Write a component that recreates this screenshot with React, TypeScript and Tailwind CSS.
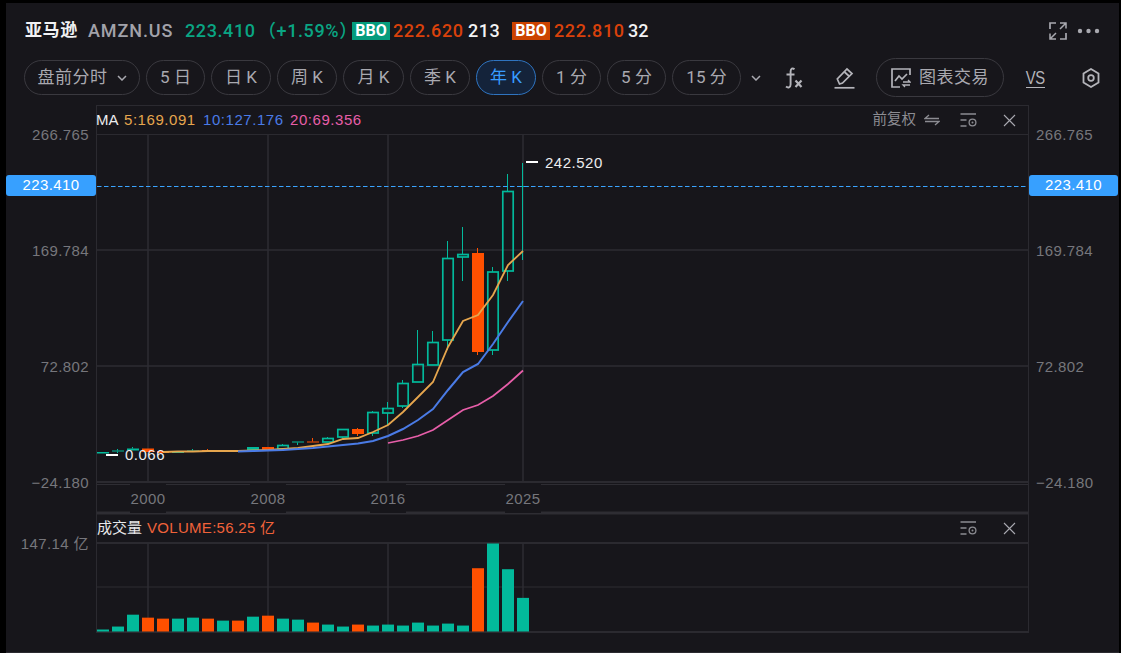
import React from "react";

const TEAL = "#02b99b";
const ORANGE = "#ff5000";
const BG = "#17161b";
const GRID = "#2e2d33";

type C = { i: number; t: number; b: number; hi?: number; lo?: number; o?: boolean; solid?: boolean };
const candles: C[] = [
  { i: 0, t: 452, b: 453.5, solid: true },
  { i: 1, t: 450.5, b: 451.5, hi: 449, lo: 453, solid: true },
  { i: 2, t: 448.5, b: 450.5, hi: 447, solid: true },
  { i: 3, t: 448.5, b: 452, o: true, solid: true },
  { i: 4, t: 451, b: 453, o: true, solid: true },
  { i: 5, t: 451.5, b: 453, solid: true },
  { i: 6, t: 450.5, b: 452, hi: 449, solid: true },
  { i: 7, t: 450, b: 451.5, hi: 449, o: true, solid: true },
  { i: 8, t: 450, b: 452, solid: true },
  { i: 9, t: 450, b: 452, o: true, solid: true },
  { i: 10, t: 447, b: 451, solid: true },
  { i: 11, t: 447, b: 450.5, o: true, solid: true },
  { i: 12, t: 445.5, b: 449, hi: 444 },
  { i: 13, t: 441.5, b: 442.5, lo: 445, solid: true },
  { i: 14, t: 441.5, b: 442.5, hi: 438, o: true, solid: true },
  { i: 15, t: 438.5, b: 442, hi: 437 },
  { i: 16, t: 429.5, b: 437, lo: 438.5 },
  { i: 17, t: 429, b: 434, hi: 428, lo: 436, o: true, solid: true },
  { i: 18, t: 412.5, b: 433, hi: 411, lo: 436 },
  { i: 19, t: 408.5, b: 413, hi: 402, lo: 425 },
  { i: 20, t: 383.5, b: 406, hi: 380, lo: 408 },
  { i: 21, t: 364.5, b: 382, hi: 330 },
  { i: 22, t: 342.5, b: 365, hi: 331 },
  { i: 23, t: 258.5, b: 340, hi: 241, lo: 350 },
  { i: 24, t: 254.5, b: 257, hi: 227, lo: 281 },
  { i: 25, t: 253, b: 352, hi: 248, lo: 355, o: true, solid: true },
  { i: 26, t: 272, b: 350, hi: 267, lo: 355 },
  { i: 27, t: 191.5, b: 271, hi: 174, lo: 281 },
];

const ma5 = "163,452 178,451.5 193,451.5 208,451 223,451 238,451 253,450.5 268,450 283,449 298,448 313,446 328,444 343,439 358,438 373,432 388,425 403,412 418,397 433,382 448,347 463,321 478,315 493,295 508,265 523,251";
const ma10 = "238,451.5 253,451 268,450.5 283,450 298,449 313,448 328,446.5 343,445 358,443.5 373,441 388,436 403,429 418,420 433,409 448,390 463,372 478,364 493,344 508,322 523,301";
const ma20 = "388,443 403,440 418,436 433,430 448,420 463,410 478,405 493,396 508,384 523,370.5";

const vols: [number, boolean][] = [
  [2, false], [5, false], [17, false], [14, true], [13, true], [13, false], [14, false], [13, true], [11, false], [11, true],
  [15, false], [16, true], [13, false], [12, false], [9, true], [7, false], [5, false], [7, true], [6, false], [7, false],
  [6, false], [9, false], [6, false], [8, false], [6, false], [64, true], [89, false], [63, false], [34, false],
];

const pills = [
  { w: "w-[59px]", t: "5 日" },
  { w: "w-[60px]", t: "日 K" },
  { w: "w-[60px]", t: "周 K" },
  { w: "w-[61px]", t: "月 K" },
  { w: "w-[60px]", t: "季 K" },
  { w: "w-[60px]", t: "年 K", active: true },
  { w: "w-[59px]", t: "1 分" },
  { w: "w-[59px]", t: "5 分" },
  { w: "w-[69px]", t: "15 分" },
];

const Chevron = () => (
  <svg width="10" height="6" viewBox="0 0 10 6" fill="none" stroke="#a9a9b0" strokeWidth="1.5">
    <path d="M1 1l4 4 4-4" />
  </svg>
);

const SettingsIcon = () => (
  <svg width="17" height="15" viewBox="0 0 17 15" fill="none" stroke="#8c8c92" strokeWidth="1.3">
    <path d="M0.5 1h15.5M0.5 7h6M0.5 13h6" />
    <circle cx="12.5" cy="9.5" r="3.4" />
    <circle cx="12.5" cy="9.5" r="1" fill="#8c8c92" stroke="none" />
  </svg>
);

const CloseIcon = () => (
  <svg width="13" height="13" viewBox="0 0 13 13" fill="none" stroke="#a9a9b0" strokeWidth="1.1">
    <path d="M1 1l11 11M12 1L1 12" />
  </svg>
);

const grid = [148, 268, 388, 523];

export default function App() {
  return (
    <div className="w-[1121px] h-[653px] bg-black pt-[3px] pl-[6px] pr-[2px] overflow-hidden font-['Liberation_Sans','Noto_Sans_CJK_SC',sans-serif]">
      <div className="h-[650px] bg-[#17161b] flex flex-col border-b border-[#2b2a30]">
        {/* header */}
        <div className="h-[55px] shrink-0 flex items-center pl-[19px] font-['Roboto','Noto_Sans_CJK_SC',sans-serif]">
          <span className="text-[17px] font-bold text-[#f2f2f4] tracking-[0.6px] w-[63px]">亚马逊</span>
          <span className="text-[18px] font-medium text-[#a2a2aa] w-[97px] tracking-[0.9px]">AMZN.US</span>
          <span className="text-[18px] font-medium text-[#0aa583] tracking-[0.6px] w-[73px]">223.410</span>
          <span className="text-[18px] font-medium text-[#0aa583] tracking-[0.6px] w-[94px] whitespace-nowrap">（+1.59%）</span>
          <span className="w-[38px] h-[18px] bg-[#059c7d] text-white text-[16px] font-bold flex items-center justify-center">BBO</span>
          <span className="ml-[3px] text-[18px] font-medium text-[#d9410b] tracking-[0.6px] w-[75px]">222.620</span>
          <span className="text-[18px] font-medium text-[#f2f2f4] tracking-[0.5px] w-[44px]">213</span>
          <span className="w-[38px] h-[18px] bg-[#cc4300] text-white text-[16px] font-bold flex items-center justify-center">BBO</span>
          <span className="ml-[4px] text-[18px] font-medium text-[#d9410b] tracking-[0.6px] w-[74px]">222.810</span>
          <span className="text-[18px] font-medium text-[#f2f2f4]">32</span>
          <div className="ml-auto flex items-center pr-[19px] gap-[10px]">
            <svg width="18" height="18" viewBox="0 0 18 18" fill="none" stroke="#a9a9b0" strokeWidth="1.7">
              <path d="M1 7V1h6M17 11v6h-6" />
              <path d="M11 1h6v5.5M16.5 1.5L11 7M7 17H1v-5.5M1.5 16.500L7 11" strokeWidth="1.5" />
            </svg>
            <svg width="23" height="6" viewBox="0 0 23 6" fill="#a9a9b0">
              <circle cx="3" cy="3" r="2.2" />
              <circle cx="11.500" cy="3" r="2.2" />
              <circle cx="20" cy="3" r="2.2" />
            </svg>
          </div>
        </div>

        {/* toolbar */}
        <div className="h-[39px] shrink-0 flex items-center pl-[18px] text-[#a9a9b0] font-['Roboto','Noto_Sans_CJK_SC',sans-serif]">
          <div className="w-[116px] h-[35px] rounded-full border border-[#3a393f] flex items-center justify-center gap-[9px] text-[17px] tracking-[0.5px]">
            <span>盘前分时</span>
            <Chevron />
          </div>
          <div className="ml-[6px] flex gap-[6px]">
            {pills.map((p) => (
              <div
                key={p.t}
                className={`${p.w} h-[35px] rounded-full border flex items-center justify-center text-[17px] whitespace-pre ${
                  p.active ? "border-[#2f74c0] bg-[#14233a] text-[#389cff]" : "border-[#3a393f]"
                }`}
              >
                {p.t}
              </div>
            ))}
          </div>
          <div className="ml-[10px]">
            <Chevron />
          </div>
          <svg className="ml-[22px]" width="20" height="22" viewBox="0 0 20 22" fill="none" stroke="#b4b4ba" strokeWidth="1.9">
            <path d="M11.5 2.2C9.5 0.6 7.6 1.6 7.600 4.500V17.500C7.600 20.600 5 21.200 3 19.600M3.500 7.500H11.500" />
            <path d="M12.500 13.500l6 6.500M18.500 13.500l-6 6.500" strokeWidth="2.2" />
          </svg>
          <svg className="ml-[31px]" width="21" height="22" viewBox="0 0 21 22" fill="none" stroke="#b4b4ba" strokeWidth="1.7">
            <path d="M4 17.500L1.800 12.500L11.500 2.500L16.500 7L7 16.500L4 17.500Z" transform="translate(1.500 -0.500)" />
            <path d="M10.500 5L15.500 9.500" />
            <path d="M0.500 20.800H20.500" />
          </svg>
          <div className="ml-[21px] w-[128px] h-[39px] rounded-full border border-[#3a393f] flex items-center pl-[14px] gap-[8px]">
            <svg width="20" height="20" viewBox="0 0 20 20" fill="none" stroke="#b4b4ba" strokeWidth="1.7">
              <path d="M19 7V1H1v18h8" />
              <path d="M4 13l4-5 3 3 5-5" />
              <path d="M12 14h7l-2-2M19 17h-7l2 2" strokeWidth="1.3" />
            </svg>
            <span className="text-[17px] tracking-[0.5px] whitespace-nowrap">图表交易</span>
          </div>
          <div className="ml-[22px] w-[19px] h-[20px] border-b-[1.5px] border-[#b4b4ba] flex items-center justify-center text-[#b4b4ba]">
            <span className="text-[19px] leading-none scale-x-[0.78] tracking-[-0.5px] font-['Liberation_Sans',sans-serif]">VS</span>
          </div>
          <svg className="ml-[37px]" width="18" height="20" viewBox="0 0 18 20" fill="none" stroke="#b4b4ba" strokeWidth="1.8">
            <path d="M9 1l7.500 4.400v9.200L9 19l-7.500-4.400V5.400Z" />
            <circle cx="9" cy="10" r="2.800" />
          </svg>
        </div>

        {/* chart */}
        <div className="mt-[8px] flex flex-1 min-h-0">
          {/* left axis */}
          <div className="w-[90px] shrink-0 relative flex flex-col items-end pr-[7px] text-[#76767c] text-[15px] tracking-[0.4px]">
            <div className="mt-[20px] h-[368px] flex flex-col justify-between text-right">
              <span className="leading-[20px]">266.765</span>
              <span className="leading-[20px]">169.784</span>
              <span className="leading-[20px]">72.802</span>
              <span className="leading-[20px]">−24.180</span>
            </div>
            <span className="mt-[41px] leading-[20px]">147.14 亿</span>
            <div className="absolute left-0 top-[70px] w-[90px] h-[21px] rounded-[3px] bg-[#37a0ff] text-white flex items-center justify-center">
              223.410
            </div>
          </div>

          {/* center */}
          <div className="w-[933px] shrink-0">
            <div className="h-[30px] border-t border-x border-b border-[#2b2a30] flex items-center text-[15px] tracking-[0.55px] whitespace-nowrap">
              <span className="text-[#ececee] w-[28px] -ml-px tracking-normal">MA</span>
              <span className="text-[#e6a64e] w-[79px]">5:169.091</span>
              <span className="text-[#4a7be6] w-[87px]">10:127.176</span>
              <span className="text-[#e75ea9]">20:69.356</span>
              <span className="ml-auto text-[#8c8c92] text-[14.500px] tracking-normal mr-[8px]">前复权</span>
              <svg width="16" height="12" viewBox="0 0 16 12" fill="none" stroke="#8c8c92" strokeWidth="1.3">
                <path d="M5 1L1 4.500H15M11 11l4-3.500H1" />
              </svg>
              <div className="ml-[20px]">
                <SettingsIcon />
              </div>
              <div className="ml-[26px] mr-[12px]">
                <CloseIcon />
              </div>
            </div>

            <div className="h-[348px] border-x border-b-2 border-[#2b2a30]">
              <svg width="931" height="346" viewBox="97 135 931 346" className="block font-['Liberation_Sans',sans-serif]">
                {grid.map((x) => (
                  <line key={x} x1={x} x2={x} y1="135" y2="481" stroke={GRID} strokeWidth="1.5" />
                ))}
                <line x1="97" x2="1028" y1="250" y2="250" stroke={GRID} strokeWidth="1.5" />
                <line x1="97" x2="1028" y1="366" y2="366" stroke={GRID} strokeWidth="1.5" />

                {candles.map((c) => {
                  const x = 103 + 15 * c.i;
                  const col = c.o ? ORANGE : TEAL;
                  return (
                    <g key={c.i}>
                      {c.hi !== undefined && <line x1={x - 0.5} x2={x - 0.5} y1={c.hi} y2={c.t} stroke={col} strokeWidth="1" />}
                      {c.lo !== undefined && <line x1={x - 0.5} x2={x - 0.5} y1={c.b} y2={c.lo} stroke={col} strokeWidth="1" />}
                      {c.solid ? (
                        <rect x={x - 6} y={c.t} width="12" height={c.b - c.t} fill={col} />
                      ) : (
                        <rect x={x - 5.2} y={c.t} width="10.4" height={c.b - c.t} fill="none" stroke={col} strokeWidth="1.7" />
                      )}
                    </g>
                  );
                })}
                <line x1="522.500" x2="522.500" y1="163" y2="260" stroke={TEAL} strokeWidth="1" />
                <line x1="517" x2="529" y1="186.500" y2="186.500" stroke={TEAL} strokeWidth="1" />

                <polyline points={ma20} fill="none" stroke="#e75ea9" strokeWidth="1.7" />
                <polyline points={ma5} fill="none" stroke="#e6a64e" strokeWidth="1.8" />
                <polyline points={ma10} fill="none" stroke="#4a7be6" strokeWidth="2" />

                <line x1="97" x2="1028" y1="186.500" y2="186.500" stroke="#3aa4ff" strokeWidth="1.2" strokeDasharray="4.500 2.500" />

                <rect x="526" y="161" width="12" height="2" fill="#fff" />
                <text x="545" y="168" fontSize="15" fill="#ececee" className="tracking-[0.5px]">242.520</text>
                <rect x="106" y="454" width="12" height="2" fill="#fff" />
                <text x="125" y="460" fontSize="15" fill="#ececee" className="tracking-[0.5px]">0.066</text>
              </svg>
            </div>

            <div className="h-[32px] border-x border-[#2b2a30]">
              <svg width="931" height="32" viewBox="97 483 931 32" className="block font-['Liberation_Sans',sans-serif]">
                <line x1="97" x2="1028" y1="484.500" y2="484.500" stroke={GRID} strokeWidth="1" />
                <rect x="97" y="511.500" width="931" height="3" fill={GRID} />
                {grid.map((x) => (
                  <rect key={x} x={x - 18} y="484" width="36" height="29" fill={BG} />
                ))}
                {[["2000", 148], ["2008", 268], ["2016", 388], ["2025", 523]].map(([t, x]) => (
                  <text key={t} x={x} y="504" fontSize="15" fill="#76767c" textAnchor="middle" className="tracking-[0.4px]">{t}</text>
                ))}
              </svg>
            </div>

            <div className="h-[29px] border-x border-b-2 border-[#2b2a30] flex items-center text-[15px] whitespace-nowrap">
              <span className="text-[#e8e8ea] w-[50px]">成交量</span>
              <span className="text-[#f0623a] tracking-[0.3px]">VOLUME:56.25 亿</span>
              <div className="ml-auto">
                <SettingsIcon />
              </div>
              <div className="ml-[26px] mr-[12px]">
                <CloseIcon />
              </div>
            </div>

            <div className="h-[89px] border-x border-b-2 border-[#2b2a30]">
              <svg width="931" height="87" viewBox="97 543.500 931 88" preserveAspectRatio="none" className="block overflow-visible">
                {grid.map((x) => (
                  <line key={x} x1={x} x2={x} y1="543" y2="632" stroke={GRID} strokeWidth="1.5" />
                ))}
                <line x1="97" x2="1028" y1="587" y2="587" stroke={GRID} strokeWidth="1" />
                {vols.map(([h, o], i) => (
                  <rect key={i} x={97 + 15 * i} y={632 - h} width="12" height={h} fill={o ? ORANGE : TEAL} />
                ))}
              </svg>
            </div>
          </div>

          {/* right axis */}
          <div className="flex-1 relative pl-[7px] text-[#76767c] text-[15px] tracking-[0.4px]">
            <div className="mt-[20px] h-[368px] flex flex-col justify-between">
              <span className="leading-[20px]">266.765</span>
              <span className="leading-[20px]">169.784</span>
              <span className="leading-[20px]">72.802</span>
              <span className="leading-[20px]">−24.180</span>
            </div>
            <div className="absolute left-0 top-[70px] w-[89px] h-[21px] rounded-[3px] bg-[#37a0ff] text-white flex items-center justify-center">
              223.410
            </div>
          </div>
        </div>
      </div>
    </div>
  );
}
